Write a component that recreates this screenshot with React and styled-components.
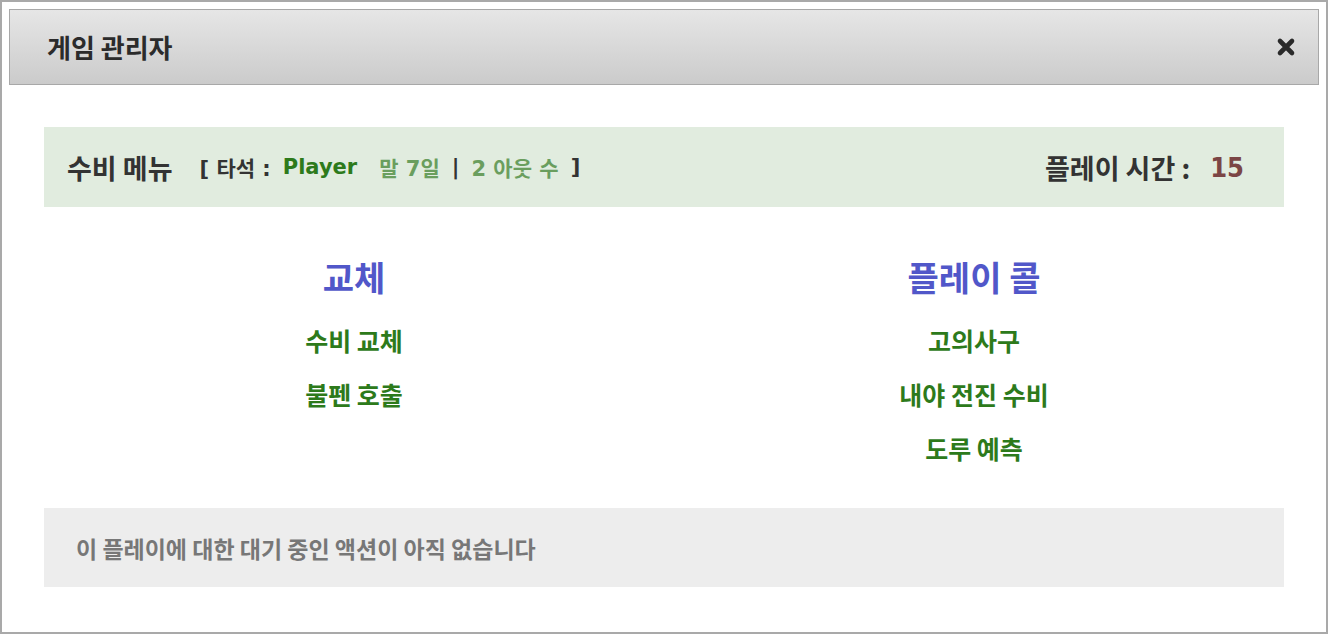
import React from 'react';
import styled, { createGlobalStyle } from 'styled-components';

const GlobalStyle = createGlobalStyle`
  html, body {
    margin: 0;
    padding: 0;
    background: #fff;
  }
  body {
    font-family: "DejaVu Sans", "Noto Sans CJK KR", sans-serif;
  }
`;

const CloseIcon = () => (
  <svg width="20" height="20" viewBox="0 0 20 20">
    <path
      d="M4 4 L16 16 M16 4 L4 16"
      stroke="#2a2a2a"
      strokeWidth="4.6"
      strokeLinecap="round"
    />
  </svg>
);

const App = () => {
  return (
    <>
      <GlobalStyle />
      <Frame>
        <Header>
          <Title>게임 관리자</Title>
          <CloseButton aria-label="닫기">
            <CloseIcon />
          </CloseButton>
        </Header>

        <Body>
          <MenuBar>
            <MenuLeft>
              <MenuTitle>수비 메뉴</MenuTitle>
              <Status>
                <Dark>[ 타석 :</Dark>
                <Batter>Player</Batter>
                <Light>말 7일</Light>
                <Dark>|</Dark>
                <Light>2 아웃 수</Light>
                <Dark>]</Dark>
              </Status>
            </MenuLeft>
            <MenuRight>
              <MenuTitle>플레이 시간 :</MenuTitle>
              <Time>15</Time>
            </MenuRight>
          </MenuBar>

          <Columns>
            <Column>
              <ColumnTitle>교체</ColumnTitle>
              <ActionLink>수비 교체</ActionLink>
              <ActionLink>불펜 호출</ActionLink>
            </Column>
            <Column>
              <ColumnTitle>플레이 콜</ColumnTitle>
              <ActionLink>고의사구</ActionLink>
              <ActionLink>내야 전진 수비</ActionLink>
              <ActionLink>도루 예측</ActionLink>
            </Column>
          </Columns>

          <Pending>이 플레이에 대한 대기 중인 액션이 아직 없습니다</Pending>
        </Body>
      </Frame>
    </>
  );
};

export default App;

const Frame = styled.div`
  box-sizing: border-box;
  width: 1328px;
  height: 634px;
  border: 2px solid #a9a9a9;
  padding: 7px;
  background: #fff;
`;

const Header = styled.div`
  box-sizing: border-box;
  height: 76px;
  display: flex;
  align-items: center;
  justify-content: space-between;
  padding: 0 22px 0 37px;
  border: 1px solid #a8a8a8;
  background: linear-gradient(to bottom, #e6e6e6 0%, #cbcbcb 100%);
`;

const Title = styled.h1`
  margin: -2px 0 0;
  font-family: "Noto Sans CJK KR", sans-serif;
  font-size: 26px;
  font-weight: 700;
  color: #2b2b2b;
`;

const CloseButton = styled.button`
  display: flex;
  align-items: center;
  justify-content: center;
  padding: 0;
  border: none;
  background: none;
  cursor: pointer;
`;

const Body = styled.div`
  padding: 42px 35px 0;
`;

const MenuBar = styled.div`
  box-sizing: border-box;
  height: 80px;
  display: flex;
  align-items: center;
  justify-content: space-between;
  padding: 0 40px 0 23px;
  background: #e1ecdf;
`;

const MenuLeft = styled.div`
  display: flex;
  align-items: center;
  gap: 27px;
`;

const MenuRight = styled.div`
  display: flex;
  align-items: center;
  gap: 20px;
`;

const MenuTitle = styled.span`
  font-family: "Noto Sans CJK KR", sans-serif;
  font-size: 27px;
  font-weight: 700;
  color: #333;
`;

const Status = styled.div`
  display: flex;
  align-items: center;
  gap: 12px;
  font-size: 21px;
  font-weight: 700;
`;

const Dark = styled.span`
  color: #333;
`;

const Batter = styled.span`
  color: #2d7a1b;
  margin-right: 10px;
`;

const Light = styled.span`
  color: #6a9e5e;
`;

const Time = styled.span`
  font-family: "DejaVu Sans Condensed", "DejaVu Sans", sans-serif;
  font-size: 27px;
  font-weight: 700;
  color: #7b4545;
`;

const Columns = styled.div`
  display: grid;
  grid-template-columns: 1fr 1fr;
  margin-top: 50px;
  align-items: start;
`;

const Column = styled.div`
  display: flex;
  flex-direction: column;
  align-items: center;
`;

const ColumnTitle = styled.h2`
  margin: 0 0 16px;
  font-family: "Noto Sans CJK KR", sans-serif;
  font-size: 34px;
  line-height: 40px;
  font-weight: 700;
  color: #5157c9;
`;

const ActionLink = styled.a`
  font-family: "Noto Sans CJK KR", sans-serif;
  font-size: 25px;
  line-height: 54px;
  font-weight: 700;
  color: #2d7a1b;
  text-decoration: none;
  cursor: pointer;
`;

const Pending = styled.div`
  box-sizing: border-box;
  height: 79px;
  margin-top: 33px;
  display: flex;
  align-items: center;
  padding-left: 32px;
  background: #ededed;
  font-family: "Noto Sans CJK KR", sans-serif;
  font-size: 23px;
  font-weight: 700;
  color: #777;
`;
